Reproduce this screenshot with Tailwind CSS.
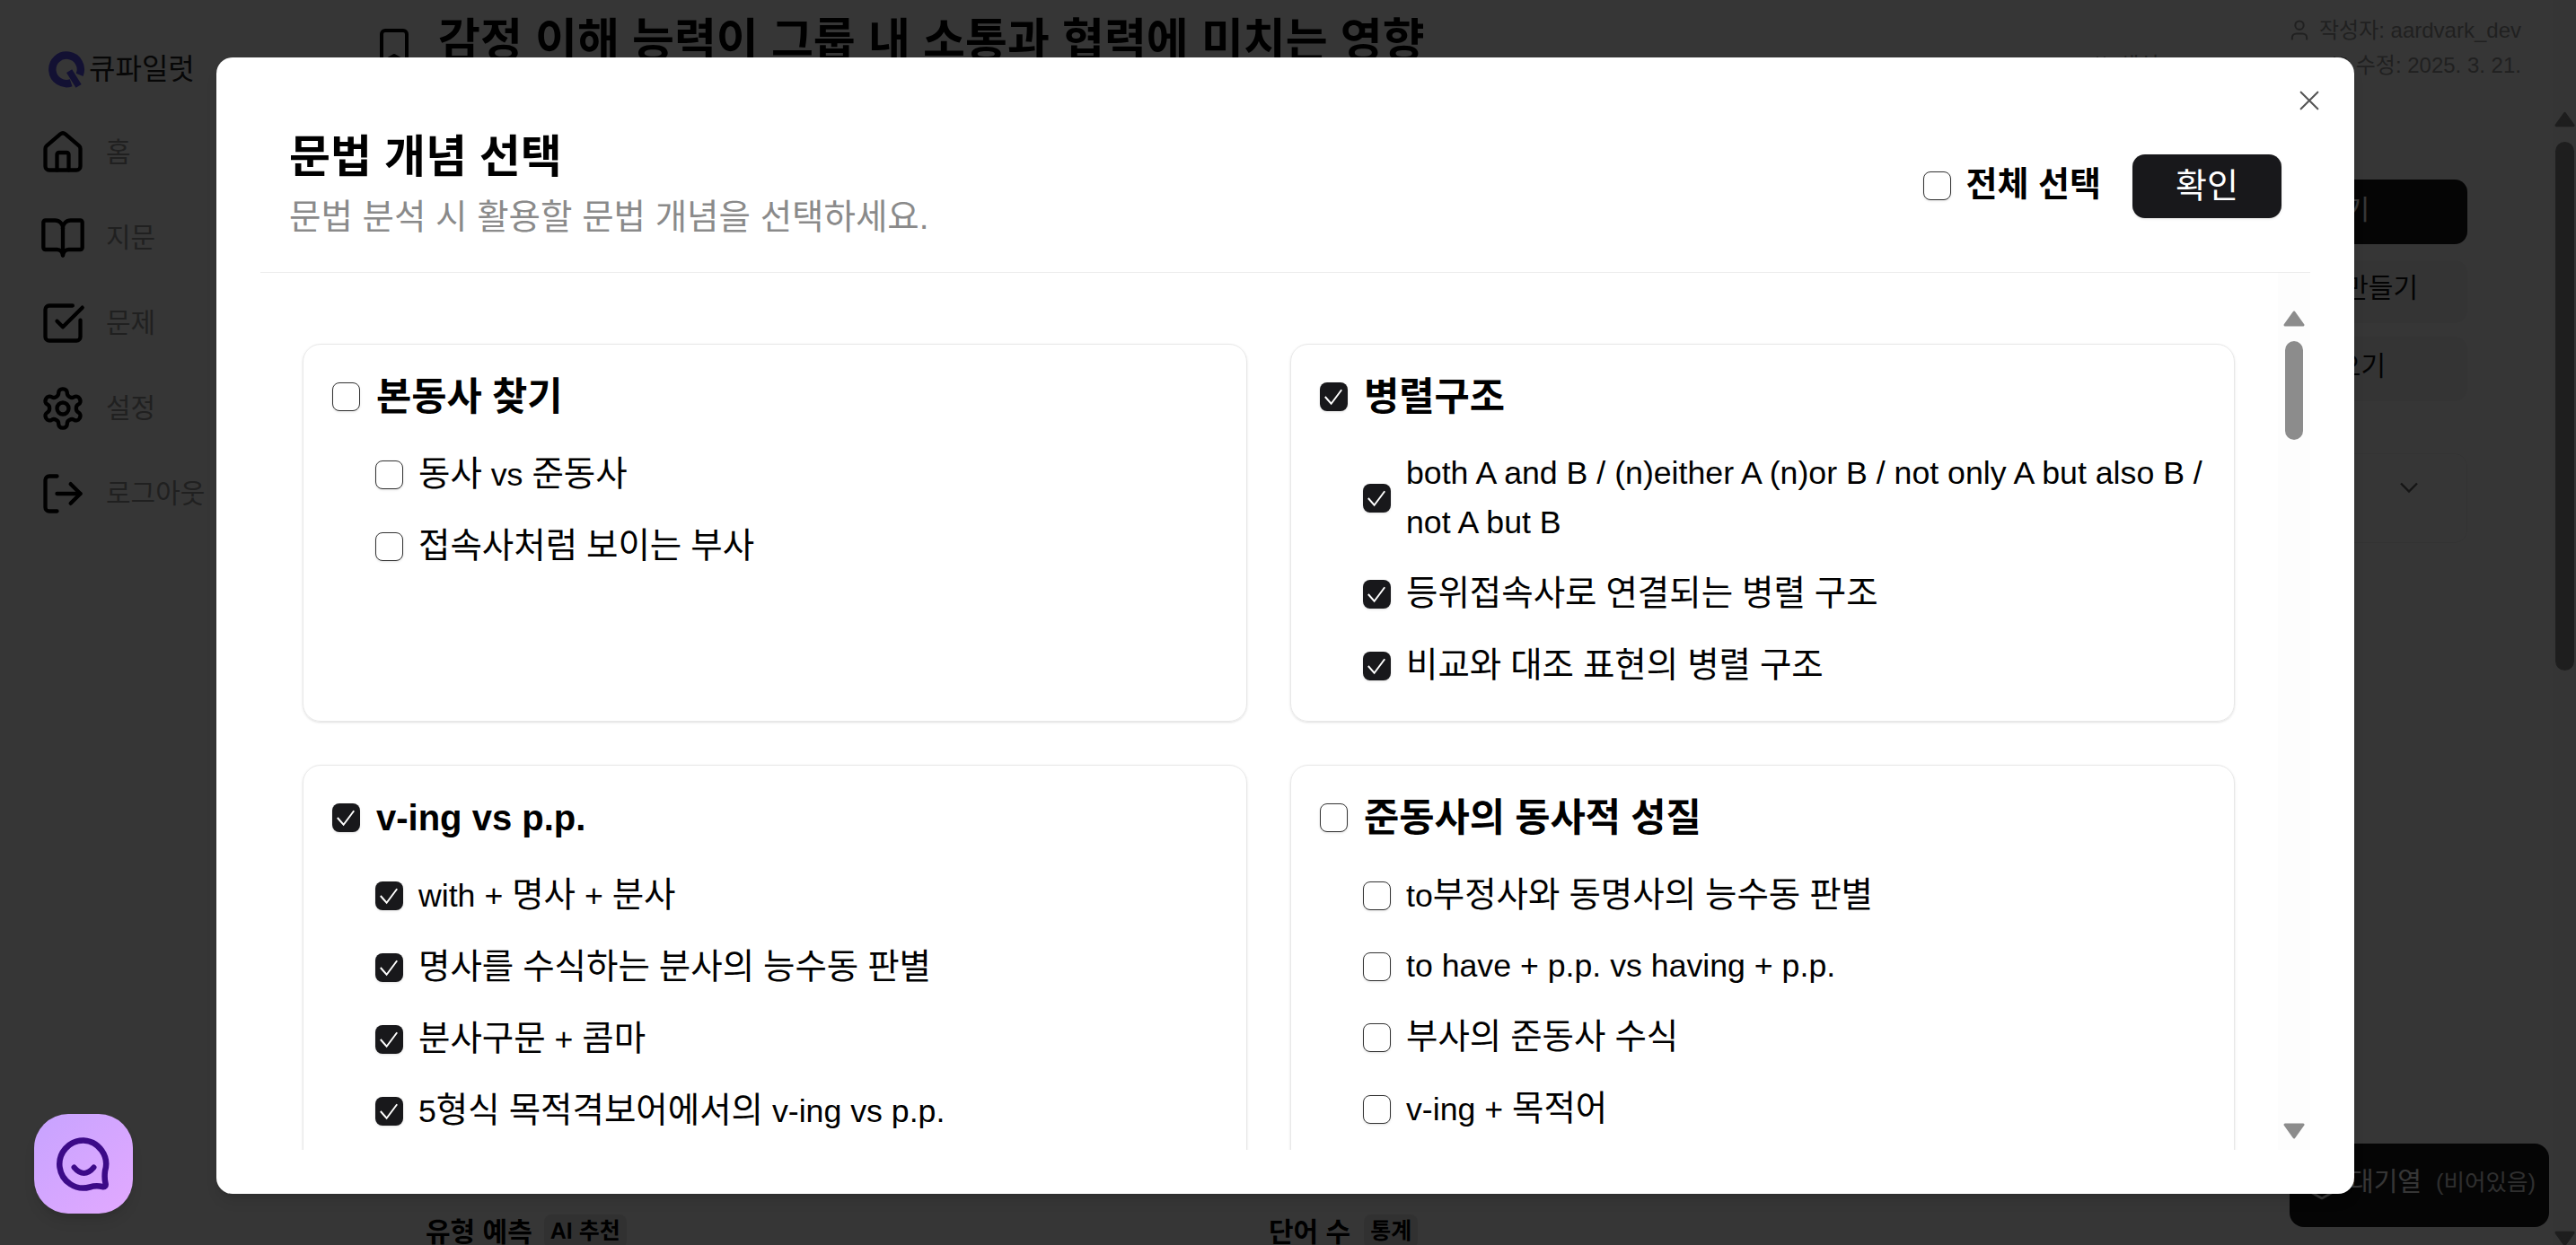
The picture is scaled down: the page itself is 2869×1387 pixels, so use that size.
<!DOCTYPE html>
<html lang="ko">
<head>
  <meta charset="UTF-8" />
  <meta name="viewport" content="width=device-width, initial-scale=1" />
  <title>문법 개념 선택</title>
  <script src="https://cdn.jsdelivr.net/npm/@tailwindcss/browser@4"></script>
</head>

<body class="relative flex h-screen w-screen overflow-hidden bg-white text-black font-['Liberation_Sans','Noto_Sans_CJK_KR',sans-serif]">
  <!-- sidebar -->
  <aside class="w-[420px] shrink-0 pl-[44px] pt-[57px]">
    <div class="flex h-[39px] items-center gap-[3px] pl-[10px]">
      <svg viewBox="0 0 40 40" class="h-[42px] w-[42px]" fill="none" stroke="#5a50f0" stroke-width="8">
        <path d="M24 34.5A15 15 0 1 1 33 26" />
        <path d="M22 22 32 38" stroke-width="7" />
      </svg>
      <span class="text-[32px] leading-none text-[#222]">큐파일럿</span>
    </div>
    <nav class="mt-[26px] flex flex-col text-[#999]">
      <a class="flex h-[95px] items-center gap-[22px]">
        <svg viewBox="0 0 24 24" class="h-[52px] w-[52px] text-black" fill="none" stroke="currentColor" stroke-width="2" stroke-linecap="round" stroke-linejoin="round"><path d="M15 21v-8a1 1 0 0 0-1-1h-4a1 1 0 0 0-1 1v8" /><path d="M3 10a2 2 0 0 1 .7-1.5l7-6a2 2 0 0 1 2.6 0l7 6A2 2 0 0 1 21 10v9a2 2 0 0 1-2 2H5a2 2 0 0 1-2-2z" /></svg>
        <span class="text-[30px]">홈</span>
      </a>
      <a class="flex h-[95px] items-center gap-[22px]">
        <svg viewBox="0 0 24 24" class="h-[52px] w-[52px] text-black" fill="none" stroke="currentColor" stroke-width="2" stroke-linecap="round" stroke-linejoin="round"><path d="M12 7v14" /><path d="M3 18a1 1 0 0 1-1-1V4a1 1 0 0 1 1-1h5a4 4 0 0 1 4 4 4 4 0 0 1 4-4h5a1 1 0 0 1 1 1v13a1 1 0 0 1-1 1h-6a3 3 0 0 0-3 3 3 3 0 0 0-3-3z" /></svg>
        <span class="text-[30px]">지문</span>
      </a>
      <a class="flex h-[95px] items-center gap-[22px]">
        <svg viewBox="0 0 24 24" class="h-[52px] w-[52px] text-black" fill="none" stroke="currentColor" stroke-width="2" stroke-linecap="round" stroke-linejoin="round"><path d="M21 10.500V19a2 2 0 0 1-2 2H5a2 2 0 0 1-2-2V5a2 2 0 0 1 2-2h12" /><path d="m9 11 3 3L22 4" /></svg>
        <span class="text-[30px]">문제</span>
      </a>
      <a class="flex h-[95px] items-center gap-[22px]">
        <svg viewBox="0 0 24 24" class="h-[52px] w-[52px] text-black" fill="none" stroke="currentColor" stroke-width="2" stroke-linecap="round" stroke-linejoin="round"><path d="M12.22 2h-.44a2 2 0 0 0-2 2v.18a2 2 0 0 1-1 1.73l-.43.25a2 2 0 0 1-2 0l-.15-.08a2 2 0 0 0-2.73.73l-.22.38a2 2 0 0 0 .73 2.73l.15.1a2 2 0 0 1 1 1.72v.51a2 2 0 0 1-1 1.74l-.15.09a2 2 0 0 0-.73 2.73l.22.38a2 2 0 0 0 2.73.73l.15-.08a2 2 0 0 1 2 0l.43.25a2 2 0 0 1 1 1.73V20a2 2 0 0 0 2 2h.44a2 2 0 0 0 2-2v-.18a2 2 0 0 1 1-1.73l.43-.25a2 2 0 0 1 2 0l.15.08a2 2 0 0 0 2.73-.73l.22-.39a2 2 0 0 0-.73-2.73l-.15-.08a2 2 0 0 1-1-1.74v-.5a2 2 0 0 1 1-1.74l.15-.09a2 2 0 0 0 .73-2.73l-.22-.38a2 2 0 0 0-2.73-.73l-.15.08a2 2 0 0 1-2 0l-.43-.25a2 2 0 0 1-1-1.73V4a2 2 0 0 0-2-2z" /><circle cx="12" cy="12" r="3" /></svg>
        <span class="text-[30px]">설정</span>
      </a>
      <a class="flex h-[95px] items-center gap-[22px]">
        <svg viewBox="0 0 24 24" class="h-[52px] w-[52px] text-black" fill="none" stroke="currentColor" stroke-width="2" stroke-linecap="round" stroke-linejoin="round"><path d="M9 21H5a2 2 0 0 1-2-2V5a2 2 0 0 1 2-2h4" /><path d="m16 17 5-5-5-5" /><path d="M21 12H9" /></svg>
        <span class="text-[30px]">로그아웃</span>
      </a>
    </nav>
  </aside>

  <!-- page behind the dialog -->
  <main class="flex min-w-0 flex-1 flex-col">
    <header class="flex h-[200px] shrink-0 items-start justify-between pl-[3px] pr-[35px] pt-[16px]">
      <div class="flex items-center">
        <svg viewBox="0 0 24 24" class="-ml-[8px] mt-[11px] h-[48px] w-[48px] shrink-0" fill="none" stroke="#000" stroke-width="2" stroke-linejoin="round"><path d="M19 21l-7-4-7 4V5a2 2 0 0 1 2-2h10a2 2 0 0 1 2 2z" /></svg>
        <h1 class="ml-[25px] text-[51px] leading-[60px] font-bold">감정 이해 능력이 그룹 내 소통과 협력에 미치는 영향</h1>
      </div>
      <div class="flex flex-col items-end gap-[7px] pt-[2px] text-[24px] leading-[31px] text-[#999]">
        <div class="flex items-center gap-[8px]">
          <svg viewBox="0 0 24 24" class="h-[28px] w-[28px]" fill="none" stroke="currentColor" stroke-width="1.800"><circle cx="12" cy="7" r="4" /><path d="M19 21v-2a4 4 0 0 0-4-4H9a4 4 0 0 0-4 4v2" /></svg>
          <span>작성자: aardvark_dev</span>
        </div>
        <div class="flex items-center gap-[8px] pt-[1px]">
          <svg viewBox="0 0 24 24" class="h-[24px] w-[24px]" fill="none" stroke="currentColor" stroke-width="2"><path d="M8 2v4M16 2v4" /><rect x="3" y="4" width="18" height="18" rx="2" /><path d="M3 10h18" /></svg>
          <span class="mr-[39px]">생성: 2025. 3. 21.</span>
          <svg viewBox="0 0 24 24" class="h-[24px] w-[24px]" fill="none" stroke="currentColor" stroke-width="2"><path d="M8 2v4M16 2v4" /><rect x="3" y="4" width="18" height="18" rx="2" /><path d="M3 10h18" /></svg>
          <span>수정: 2025. 3. 21.</span>
        </div>
      </div>
    </header>
    <div class="flex justify-end pr-[95px]">
      <div class="flex w-[400px] flex-col text-[30px]">
        <button class="flex h-[72px] items-center justify-end rounded-[14px] bg-[#18181b] pb-[6px] pr-[109px] text-white">문제 생성하기</button>
        <button class="mt-[18px] flex h-[70px] items-center justify-end rounded-[14px] bg-[#f4f4f5] pb-[10px] pr-[55px] text-[#111]">새 문제 만들기</button>
        <button class="mt-[15px] flex h-[72px] items-center justify-end rounded-[14px] bg-[#f4f4f5] pb-[8px] pr-[91px] text-[#111]">불러오기</button>
        <div class="mt-[58px] flex h-[100px] items-start justify-end rounded-[14px] border border-[#f0f0f0] pr-[46px] pt-[19px]">
          <svg viewBox="0 0 24 24" class="h-[36px] w-[36px]" fill="none" stroke="#666" stroke-width="1.600"><path d="m6 9 6 6 6-6" /></svg>
        </div>
      </div>
    </div>
    <div class="mt-auto flex h-[30px] items-center pl-[54px] font-bold">
      <div class="flex w-[939px] items-center gap-[13px]">
        <span class="text-[30px]">유형 예측</span>
        <span class="rounded-[8px] bg-[#e8e8e8] px-[7px] text-[25px]">AI 추천</span>
      </div>
      <div class="flex items-center gap-[15px]">
        <span class="text-[30px]">단어 수</span>
        <span class="rounded-[8px] bg-[#e8e8e8] px-[7px] text-[25px]">통계</span>
      </div>
    </div>
  </main>

  <!-- page scrollbar -->
  <div class="flex w-[26px] shrink-0 flex-col items-center bg-[#fafafa]">
    <svg viewBox="0 0 24 18" class="mt-[124px] h-[18px] w-[23px]"><path d="M12 2 22 16H2z" fill="#8c8c8c" stroke="#8c8c8c" stroke-width="3" stroke-linejoin="round" /></svg>
    <div class="mt-[16px] h-[589px] w-[21px] rounded-full bg-[#8c8c8c]"></div>
    <svg viewBox="0 0 24 18" class="mt-auto mb-[-2px] h-[18px] w-[23px]"><path d="M12 16 22 2H2z" fill="#8c8c8c" stroke="#8c8c8c" stroke-width="3" stroke-linejoin="round" /></svg>
  </div>

  <!-- queue button -->
  <div class="absolute bottom-[20px] right-[30px] flex h-[93px] w-[289px] items-center rounded-[16px] bg-[#18181b] pb-[6px] pl-[20px] text-white">
    <svg viewBox="0 0 24 24" class="mt-[18px] h-[32px] w-[32px]" fill="none" stroke="currentColor" stroke-width="2" stroke-linejoin="round"><path d="m12 3 9 5-9 5-9-5z" /><path d="m3 13 9 5 9-5" /></svg>
    <span class="ml-[15px] text-[29px]">대기열</span>
    <span class="ml-[16px] text-[25.500px] text-[#ddd]">(비어있음)</span>
  </div>

  <!-- dim -->
  <div class="absolute inset-0 bg-black/79"></div>

  <!-- chat launcher -->
  <button class="absolute left-[38px] top-[1241px] flex h-[111px] w-[110px] items-center justify-center rounded-[38px] bg-gradient-to-br from-[#c7a3ff] to-[#e2a9ff] shadow-lg">
    <svg viewBox="0 0 64 64" class="h-[64px] w-[64px]" fill="none" stroke="#3c0a88" stroke-width="6.500" stroke-linecap="round" stroke-linejoin="round">
      <path d="M32 5.500a26.500 26.500 0 1 0 7 52c4-1.200 8-1.800 14-.5 3 .6 4.200-1 3.500-3.800-1-4-1.200-8-.5-13.700A26.500 26.500 0 0 0 32 5.500z" />
      <path d="M21.500 35.500Q32.500 48.500 43.500 35.500" stroke-width="6" />
    </svg>
  </button>

  <!-- dialog -->
  <section class="absolute left-[241px] top-[64px] flex h-[1266px] w-[2381px] flex-col rounded-[18px] bg-white shadow-lg">
    <button class="absolute right-[36px] top-[34px] text-[#555]" aria-label="닫기">
      <svg viewBox="0 0 24 24" class="h-[28px] w-[28px]" fill="none" stroke="currentColor" stroke-width="1.800" stroke-linecap="round"><path d="M4 4l16 16M20 4 4 20" /></svg>
    </button>

    <header class="mx-[49px] flex h-[240px] shrink-0 items-center justify-between border-b border-[#ececec] px-[32px] pt-[47px]">
      <div class="mb-[5px]">
        <h2 class="text-[50px] leading-[74px] font-bold">문법 개념 선택</h2>
        <p class="text-[38.5px] leading-[60px] text-[#8a8a8a]">문법 분석 시 활용할 문법 개념을 선택하세요.</p>
      </div>
      <div class="flex items-center gap-[35px]">
        <label class="flex items-center gap-[17px]">
          <input type="checkbox" class="h-[32px] w-[31px] appearance-none rounded-[8px] border border-[#333] bg-white shadow-sm" />
          <span class="pb-[3px] text-[38px] font-bold">전체 선택</span>
        </label>
        <button class="h-[71px] w-[166px] rounded-[14px] bg-[#18181b] text-[38px] text-white shadow-sm">확인</button>
      </div>
    </header>

    <div class="mx-[49px] mb-[49px] flex min-h-0 flex-1">
      <div id="cards" class="grid min-w-0 flex-1 grid-cols-2 content-start gap-x-[48px] gap-y-[48px] overflow-hidden pl-[47px] pr-[48px] pt-[79px]"></div>
      <!-- dialog scrollbar -->
      <div class="flex w-[36px] shrink-0 flex-col items-center bg-[#fdfdfd] pb-[12px] pt-[42px]">
        <svg viewBox="0 0 24 18" class="h-[18px] w-[24px]"><path d="M12 2 22 16H2z" fill="#8c8c8c" stroke="#8c8c8c" stroke-width="3" stroke-linejoin="round" /></svg>
        <div class="mt-[16px] h-[110px] w-[20px] rounded-full bg-[#8c8c8c]"></div>
        <svg viewBox="0 0 24 18" class="mt-auto h-[18px] w-[24px]"><path d="M12 16 22 2H2z" fill="#8c8c8c" stroke="#8c8c8c" stroke-width="3" stroke-linejoin="round" /></svg>
      </div>
    </div>
  </section>

  <script>
    const groups = [
      { title: "본동사 찾기", checked: false, items: ["동사 vs 준동사", "접속사처럼 보이는 부사"] },
      { title: "병렬구조", checked: true, items: ["both A and B / (n)either A (n)or B / not only A but also B / not A but B", "등위접속사로 연결되는 병렬 구조", "비교와 대조 표현의 병렬 구조"] },
      { title: "v-ing vs p.p.", checked: true, items: ["with + 명사 + 분사", "명사를 수식하는 분사의 능수동 판별", "분사구문 + 콤마", "5형식 목적격보어에서의 v-ing vs p.p."] },
      { title: "준동사의 동사적 성질", checked: false, items: ["to부정사와 동명사의 능수동 판별", "to have + p.p. vs having + p.p.", "부사의 준동사 수식", "v-ing + 목적어"] },
    ];

    function box(checked) {
      if (!checked) {
        return '<span class="h-[32px] w-[31px] shrink-0 rounded-[8px] border border-[#333] bg-white shadow-sm"></span>';
      }
      return '<span class="flex h-[32px] w-[31px] shrink-0 items-center justify-center rounded-[8px] bg-[#18181b] shadow-sm">' +
        '<svg viewBox="0 0 32 32" class="h-[32px] w-[31px]" fill="none" stroke="#fff" stroke-width="2"><path d="M6 16l7 8L25 8" /></svg></span>';
    }

    // hangul runs sit a bit larger than the latin around them
    const mix = (text, cls) => text.replace(/[가-힣]+/g, m => `<span class="${cls}">${m}</span>`);

    document.getElementById("cards").innerHTML = groups.map((g, i) => `
      <div class="flex ${i < 2 ? "min-h-[421px]" : "min-h-[520px]"} flex-col gap-[32px] rounded-[20px] border border-[#e8e8e8] p-[32px] shadow-sm">
        <div class="flex h-[52px] items-center gap-[18px]">
          ${box(g.checked)}
          <span class="text-[40px] leading-[52px] font-bold">${mix(g.title, "text-[42.700px]")}</span>
        </div>
        <div class="flex flex-col gap-[23px] pl-[48px]">
          ${g.items.map(t => `
            <div class="flex items-center gap-[17px]">
              ${box(g.checked)}
              <span class="text-[35.700px] leading-[55px]">${mix(t, "text-[38.500px]")}</span>
            </div>`).join("")}
        </div>
      </div>`).join("");
  </script>
</body>
</html>
